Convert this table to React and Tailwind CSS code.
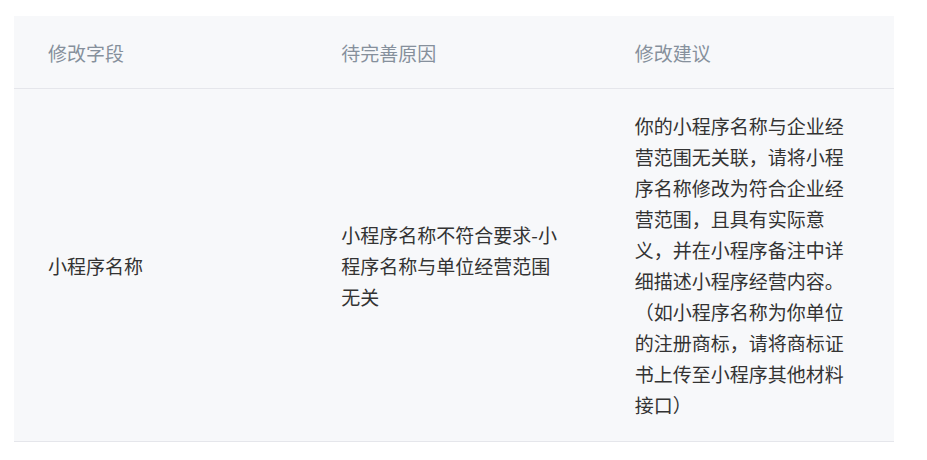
const rows = [
  {
    field: '小程序名称',
    reason: '小程序名称不符合要求-小程序名称与单位经营范围无关',
    advice:
      '你的小程序名称与企业经营范围无关联，请将小程序名称修改为符合企业经营范围，且具有实际意义，并在小程序备注中详细描述小程序经营内容。（如小程序名称为你单位的注册商标，请将商标证书上传至小程序其他材料接口）',
  },
];

const cell = 'pl-[34px] pr-[40px] flex items-center';

export default function App() {
  return (
    <div
      className="w-[927px] h-[460px] bg-white pt-[16px] pl-[14px]"
      style={{ fontFamily: '"Microsoft YaHei", "Noto Sans CJK SC", "Noto Sans", sans-serif' }}
    >
      <div className="w-[880px] bg-[#f7f8fa] text-[19px] leading-[31px]">
        <div className="grid grid-cols-3 h-[73px] border-b border-[#e5e6eb] text-[#86909c]">
          <div className={cell}>修改字段</div>
          <div className={cell}>待完善原因</div>
          <div className={cell}>修改建议</div>
        </div>
        {rows.map((r, i) => (
          <div key={i} className="grid grid-cols-3 border-b border-[#e5e6eb] text-[#333333]">
            <div className={cell}>{r.field}</div>
            <div className={cell}>{r.reason}</div>
            <div className={`${cell} py-[21px]`}>{r.advice}</div>
          </div>
        ))}
      </div>
    </div>
  );
}
